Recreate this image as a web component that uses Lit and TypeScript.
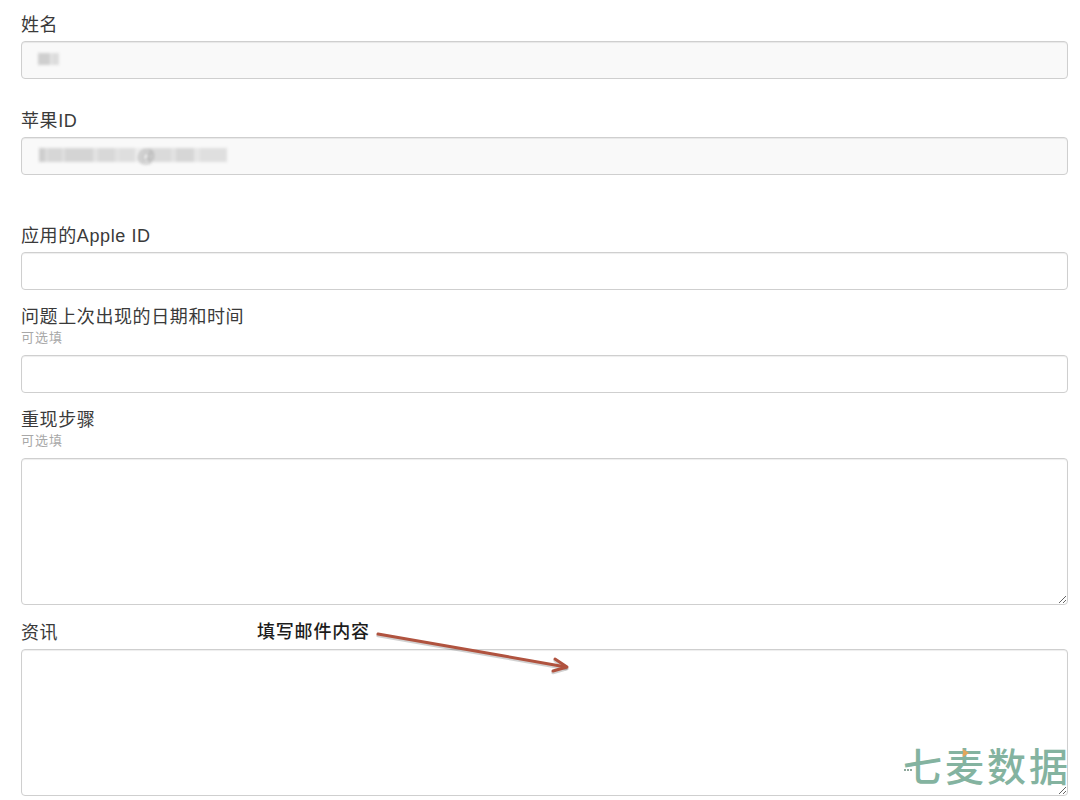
import { LitElement, html, css } from 'lit';
import { customElement } from 'lit/decorators.js';

// greyed-out stretches of the redacted values: [width, grey]
const NAME_MASK = [[12, '#cfcfcf'], [2, '#e6e6e6'], [7, '#dcdcdc']];
const ID_MASK = [
  [6, '#cdcdcd'], [3, '#dedede'], [14, '#d6d6d6'], [3, '#e0e0e0'], [28, '#d4d4d4'], [5, '#e2e2e2'],
  [17, '#d8d8d8'], [4, '#e2e2e2'], [16, '#dedede'], [14, '#ececec'], [22, '#dadada'], [5, '#e2e2e2'],
  [18, '#d6d6d6'], [6, '#e6e6e6'], [27, '#dfdfdf'],
];

@customElement('app-root')
export class AppRoot extends LitElement {
  static styles = css`
    :host {
      display: block;
      position: relative;
      height: 800px;
      overflow: hidden;
      background: #fff;
      color: #3a3a3a;
      font-family: "Liberation Sans", "Noto Sans CJK SC", sans-serif;
    }

    form {
      display: flex;
      flex-direction: column;
      padding: 12px 12px 0 21px;
    }

    .field {
      display: flex;
      flex-direction: column;
    }

    .gap-name { margin-top: 29px; }
    .gap-app { margin-top: 48px; }
    .gap-small { margin-top: 14px; }
    .gap-info { margin-top: 15px; }

    label {
      font-size: 18px;
      line-height: 26px;
      letter-spacing: 0.6px;
      margin-bottom: 3px;
    }

    label.with-hint {
      margin-bottom: 0;
    }

    .hint {
      font-size: 13px;
      line-height: 16px;
      letter-spacing: 1px;
      color: #a8a8a8;
      margin-bottom: 9px;
    }

    .control {
      position: relative;
    }

    input,
    textarea {
      display: block;
      width: 100%;
      box-sizing: border-box;
      margin: 0;
      padding: 6px 12px;
      border: 1px solid #cfcfcf;
      border-radius: 4px;
      background: #fff;
      box-shadow: inset 0 1px 1px rgba(0, 0, 0, 0.07);
      outline: none;
      font: inherit;
    }

    input {
      height: 38px;
    }

    input[readonly] {
      background: #f9f9f9;
    }

    textarea {
      height: 147px;
      resize: vertical;
    }

    .mask {
      position: absolute;
      display: flex;
      align-items: stretch;
      filter: blur(1.4px);
    }

    .mask-name {
      left: 17px;
      top: 12px;
      height: 12px;
    }

    .mask-id {
      left: 18px;
      top: 11px;
      height: 14px;
    }

    .at {
      position: absolute;
      left: 98px;
      top: -2px;
      font-size: 18px;
      line-height: 20px;
      color: #a4a4a4;
    }

    .note {
      position: absolute;
      left: 257px;
      top: 619px;
      font-size: 18px;
      line-height: 26px;
      letter-spacing: 0.8px;
      font-weight: 500;
      color: #1c1c1c;
    }

    .arrow {
      position: absolute;
      left: 370px;
      top: 625px;
    }

    .mark {
      position: absolute;
      left: 903px;
      top: 745px;
      color: #84b3a0;
      font-size: 39px;
      font-weight: 500;
      line-height: 46px;
      letter-spacing: 3px;
      white-space: nowrap;
    }

    .mark-dot {
      position: absolute;
      left: 60px;
      top: 4px;
      width: 0;
      height: 0;
      border-left: 6px solid #e2a65c;
      border-top: 4px solid transparent;
      border-bottom: 4px solid transparent;
    }

    .mark-tick {
      position: absolute;
      left: 1px;
      top: 24px;
      width: 8px;
      border-top: 2px dotted #8fa89c;
    }
  `;

  private renderMask(parts: (string | number)[][]) {
    return parts.map(([w, grey]) => html`<span style="width:${w}px;background:${grey}"></span>`);
  }

  render() {
    return html`
      <form>
        <div class="field">
          <label>姓名</label>
          <div class="control">
            <input readonly />
            <div class="mask mask-name">${this.renderMask(NAME_MASK)}</div>
          </div>
        </div>

        <div class="field gap-name">
          <label>苹果ID</label>
          <div class="control">
            <input readonly />
            <div class="mask mask-id">
              ${this.renderMask(ID_MASK)}
              <span class="at">@</span>
            </div>
          </div>
        </div>

        <div class="field gap-app">
          <label>应用的Apple ID</label>
          <div class="control"><input /></div>
        </div>

        <div class="field gap-small">
          <label class="with-hint">问题上次出现的日期和时间</label>
          <div class="hint">可选填</div>
          <div class="control"><input /></div>
        </div>

        <div class="field gap-small">
          <label class="with-hint">重现步骤</label>
          <div class="hint">可选填</div>
          <div class="control"><textarea></textarea></div>
        </div>

        <div class="field gap-info">
          <label>资讯</label>
          <div class="control"><textarea></textarea></div>
        </div>
      </form>

      <div class="note">填写邮件内容</div>
      <svg class="arrow" width="205" height="55" viewBox="370 625 205 55" fill="none">
        <g stroke="#000" stroke-opacity="0.18" stroke-width="3.5" stroke-linecap="round" stroke-linejoin="round" transform="translate(0 1.5)">
          <path d="M378 634 C410 640 500 655 566 667" />
          <path d="M555 659 L567 667 L553 671" />
        </g>
        <g stroke="#b0533f" stroke-width="3" stroke-linecap="round" stroke-linejoin="round">
          <path d="M378 634 C410 640 500 655 566 667" />
          <path d="M555 659 L567 667 L553 671" />
        </g>
      </svg>

      <div class="mark">七麦数据<span class="mark-dot"></span><span class="mark-tick"></span></div>
    `;
  }
}
